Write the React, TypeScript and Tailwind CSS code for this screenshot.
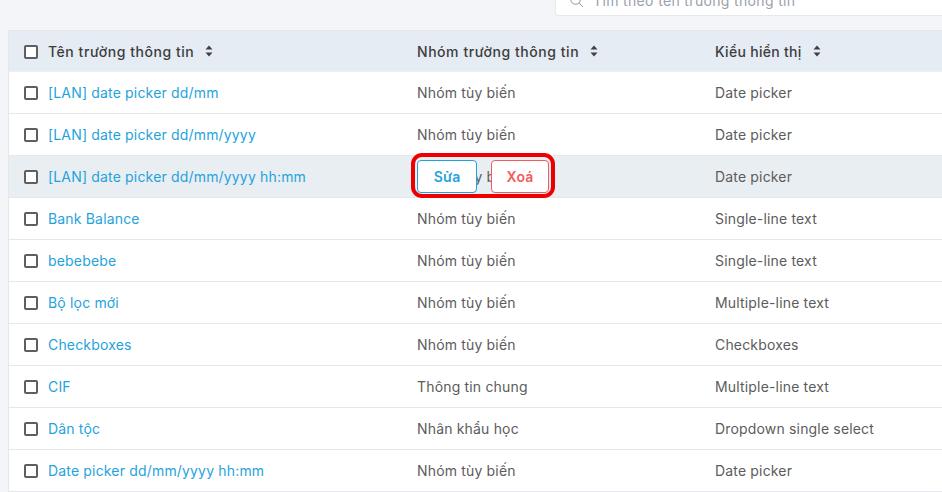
import React from "react";

const rows = [
  ["[LAN] date picker dd/mm", "Nhóm tùy biến", "Date picker"],
  ["[LAN] date picker dd/mm/yyyy", "Nhóm tùy biến", "Date picker"],
  ["[LAN] date picker dd/mm/yyyy hh:mm", "Nhóm tùy biến", "Date picker"],
  ["Bank Balance", "Nhóm tùy biến", "Single-line text"],
  ["bebebebe", "Nhóm tùy biến", "Single-line text"],
  ["Bộ lọc mới", "Nhóm tùy biến", "Multiple-line text"],
  ["Checkboxes", "Nhóm tùy biến", "Checkboxes"],
  ["CIF", "Thông tin chung", "Multiple-line text"],
  ["Dân tộc", "Nhân khẩu học", "Dropdown single select"],
  ["Date picker dd/mm/yyyy hh:mm", "Nhóm tùy biến", "Date picker"],
];

function Box() {
  return <span className="block h-[14px] w-[14px] shrink-0 rounded-[2px] border-2 border-[#5f5f5f] bg-white" />;
}

function Sort() {
  return (
    <svg width="8" height="12" viewBox="0 0 8 12" className="ml-[11px] shrink-0" fill="#3f3f46">
      <path d="M4 0.5 L7.5 4.5 H0.5 Z" />
      <path d="M4 11.5 L7.5 7.5 H0.5 Z" />
    </svg>
  );
}

export default function App() {
  return (
    <div
      className="h-[492px] w-[942px] overflow-hidden bg-[#f3f5f8] text-[14px] tracking-[0.17px]"
      style={{ fontFamily: "Inter, 'Noto Sans', sans-serif" }}
    >
      <div className="flex h-[30px] justify-end">
        <div className="-mt-[16px] flex h-[32px] w-[387px] items-center gap-[9px] rounded-l-[4px] border border-r-0 border-[#e6e8ec] bg-white pl-[13px] tracking-[0.35px] text-[#9aa1ab]">
          <svg width="15" height="15" viewBox="0 0 24 24" fill="none" stroke="#8f96a0" strokeWidth="1.6">
            <circle cx="10.5" cy="10.5" r="7.5" />
            <path d="M16 16l6 6" />
          </svg>
          <span>Tìm theo tên trường thông tin</span>
        </div>
      </div>
      <div className="ml-2 border-l border-t border-[#e4e7eb]">
        <div className="grid h-[41px] grid-cols-[408px_298px_1fr] items-center border-b border-[#edf0f3] bg-[#e5ecf4] font-medium tracking-[0.55px] text-[#3d3d3d]">
          <div className="flex items-center pl-[15px]">
            <span className="mt-[2px]">
              <Box />
            </span>
            <span className="ml-[10px]">Tên trường thông tin</span>
            <Sort />
          </div>
          <div className="flex items-center">
            <span>Nhóm trường thông tin</span>
            <Sort />
          </div>
          <div className="flex items-center tracking-[0.3px]">
            <span>Kiểu hiển thị</span>
            <Sort />
          </div>
        </div>
        {rows.map((r, i) => (
          <div
            key={r[0]}
            className={
              "grid h-[42px] grid-cols-[408px_298px_1fr] items-center border-b border-[#e4e7eb] text-[#5c5c5c] " +
              (i === 2 ? "bg-[#e9eef3]" : "bg-white")
            }
          >
            <div className="flex items-center pl-[15px]">
              <Box />
              <span className="ml-[10px] text-[#1fa3dc]">{r[0]}</span>
            </div>
            <div className="relative">
              <span>{r[1]}</span>
              {i === 2 && (
                <div className="absolute left-[-6px] top-[-13px] flex h-[45px] w-[144px] items-start gap-[14px] rounded-[11px] border-[4px] border-[#ee0000] pl-[2px] pt-[3px]">
                  <button className="h-[33px] w-[60px] shrink-0 rounded-[4px] border border-[#1fa3dc] bg-white font-semibold text-[#1fa3dc]">
                    Sửa
                  </button>
                  <button className="h-[33px] w-[58px] shrink-0 rounded-[4px] border border-[#f25c5c] bg-white font-semibold text-[#f25c5c]">
                    Xoá
                  </button>
                </div>
              )}
            </div>
            <div>{r[2]}</div>
          </div>
        ))}
      </div>
    </div>
  );
}
